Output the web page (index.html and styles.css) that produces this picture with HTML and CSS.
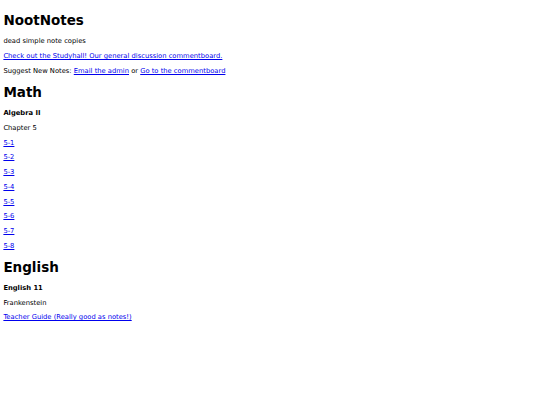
FILE: index.html
```html
<html>
<head>
<title>NootNotes</title>
<link rel="stylesheet" href="styles.css">
</head>
<body class="page">

<h1 class="title">NootNotes</h1>
<p class="line">dead simple note copies</p>
<p class="line"><a href="#" class="link">Check out the Studyhall! Our general discussion commentboard.</a></p>
<p class="line">Suggest New Notes: <a href="#" class="link">Email the admin</a> or <a href="#" class="link">Go to the commentboard</a></p>

<!-- MATH -->
<h1 class="title">Math</h1>
<p class="line course">Algebra II</p>
<p class="line">Chapter 5</p>
<p class="line"><a href="#" class="link">5-1</a></p>
<p class="line"><a href="#" class="link">5-2</a></p>
<p class="line"><a href="#" class="link">5-3</a></p>
<p class="line"><a href="#" class="link">5-4</a></p>
<p class="line"><a href="#" class="link">5-5</a></p>
<p class="line"><a href="#" class="link">5-6</a></p>
<p class="line"><a href="#" class="link">5-7</a></p>
<p class="line"><a href="#" class="link">5-8</a></p>

<!-- ENGLISH -->
<h1 class="title">English</h1>
<p class="line course">English 11</p>
<p class="line">Frankenstein</p>
<p class="line"><a href="#" class="link">Teacher Guide (Really good as notes!)</a></p>

</body>
</html>
```

FILE: styles.css
```css
body.page
{
margin:3.375px;
font-family:"DejaVu Sans", Verdana, sans-serif;
font-size:6.75px;
color:black;
background:white;
}

h1.title
{
font-size:13.5px;
font-weight:bold;
margin:9.045px 0;
}

p.line
{
margin:6.75px 0;
}

p.course
{
font-weight:bold;
}

a.link
{
color:#0000EE;
text-decoration:underline;
}
```
